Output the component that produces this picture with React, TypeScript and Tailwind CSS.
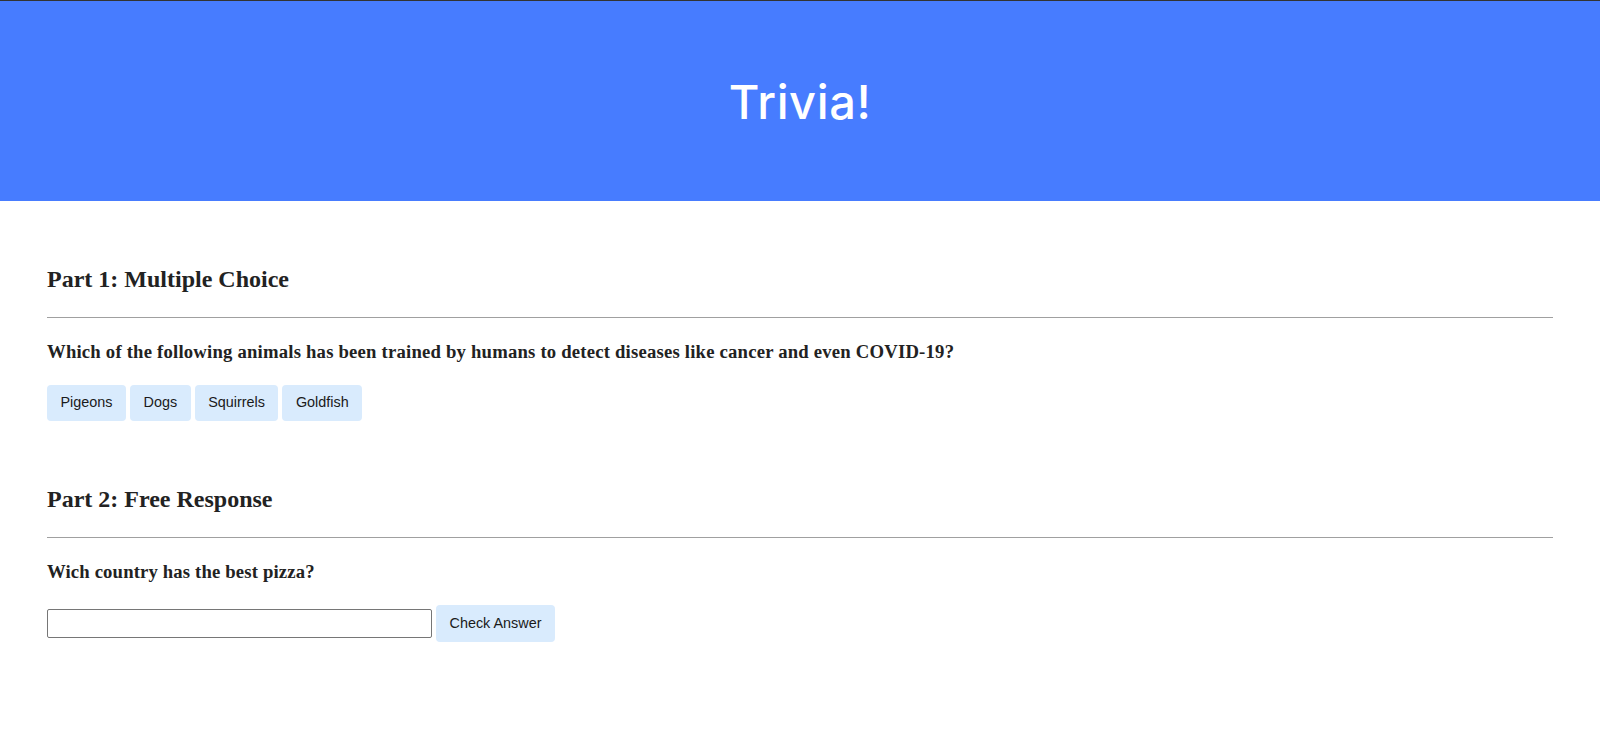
const choices = ["Pigeons", "Dogs", "Squirrels", "Goldfish"];

const serif = { fontFamily: '"Liberation Serif", "Times New Roman", serif' };

const App = () => {
  return (
    <div className="min-h-[737px] bg-white border-t border-[#333]">
      {/* Banner */}
      <header className="flex h-[200px] items-center justify-center bg-[#477cff]">
        <h1 className="text-[47px] leading-none font-medium tracking-[0.6px] text-white font-['Inter',sans-serif]">
          Trivia!
        </h1>
      </header>

      <main className="px-[47px] text-[#222]" style={serif}>
        {/* Part 1 */}
        <section className="pt-16">
          <h2 className="text-[24px] leading-[28px] font-bold">Part 1: Multiple Choice</h2>
          <hr className="mt-6 border-t border-[#a0a0a0]" />
          <h3 className="mt-[23px] text-[18.7px] leading-[22px] font-bold tracking-[0.2px]">
            Which of the following animals has been trained by humans to detect diseases like cancer and even COVID-19?
          </h3>
          <div className="mt-[22px] flex gap-1 font-['Liberation_Sans',Arial,sans-serif]">
            {choices.map((c) => (
              <button
                key={c}
                className="h-9 rounded px-[13.5px] text-[14.4px] text-[#1a1a1a] bg-[#d9ebfd]"
              >
                {c}
              </button>
            ))}
          </div>
        </section>

        {/* Part 2 */}
        <section className="pt-16">
          <h2 className="text-[24px] leading-[28px] font-bold">Part 2: Free Response</h2>
          <hr className="mt-6 border-t border-[#a0a0a0]" />
          <h3 className="mt-[23px] text-[18.7px] leading-[22px] font-bold tracking-[0.15px]">
            Wich country has the best pizza?
          </h3>
          <div className="mt-[22px] flex items-center gap-1 font-['Liberation_Sans',Arial,sans-serif]">
            <input
              type="text"
              className="h-[29px] w-[385px] rounded-[2px] border border-[#767676] px-1 text-[14px]"
            />
            <button className="h-[37px] rounded px-[13.5px] text-[14.4px] text-[#1a1a1a] bg-[#d9ebfd]">
              Check Answer
            </button>
          </div>
        </section>
      </main>
    </div>
  );
};

export default App;
